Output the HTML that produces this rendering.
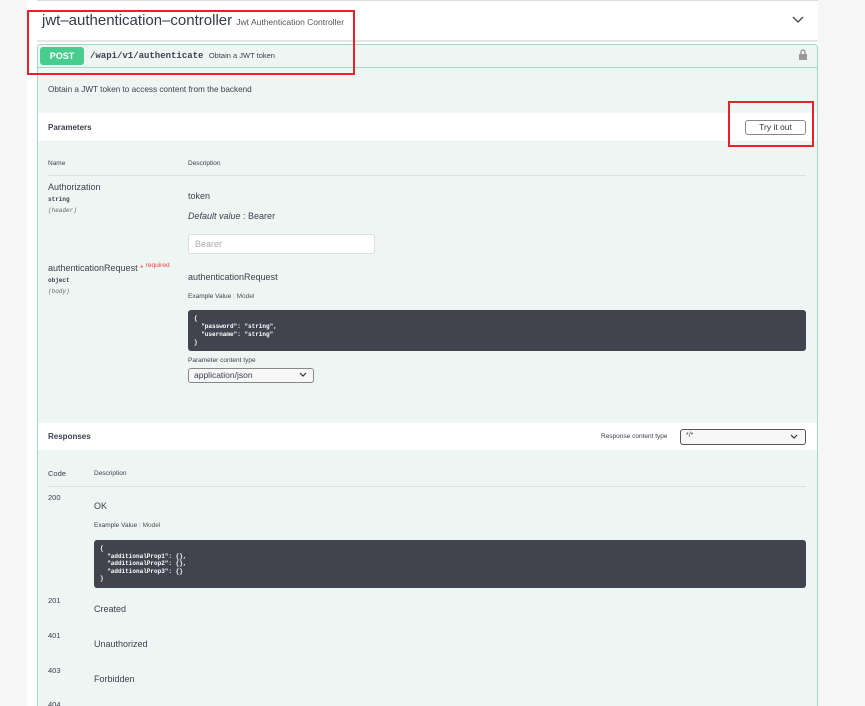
<!DOCTYPE html>
<html style="width:865px;height:706px;overflow:hidden"><head><style>
*{margin:0;padding:0;box-sizing:border-box}
body{width:865px;height:706px;overflow:hidden;background:#f6f6f6;font-family:"Liberation Sans",sans-serif;color:#3b4151;position:relative}
.a{position:absolute;white-space:nowrap}
.mono{font-family:"Liberation Mono",monospace;font-weight:bold}
</style></head><body>
<div class="a" style="left:27px;top:0;width:791px;height:706px;background:#fff"></div>
<div class="a" style="left:37px;top:0;width:781px;height:1px;background:#ddd"></div>
<div class="a" style="left:42px;top:12px;font-size:15px;color:#333a48">jwt–authentication–controller <span style="font-size:8.5px;color:#555">Jwt Authentication Controller</span></div>
<svg class="a" style="left:791px;top:15px" width="14" height="10"><path d="M2 2 L7 7 L12 2" stroke="#444" stroke-width="1.3" fill="none"/></svg>
<div class="a" style="left:37px;top:40px;width:781px;height:2px;background:#e6e6e6"></div>
<div class="a" style="left:37px;top:44px;width:781px;height:662px;background:#edf6f2;border:1px solid #9fdcbf;border-bottom:none;border-radius:3px 3px 0 0"></div>
<div class="a" style="left:37px;top:67px;width:781px;height:1px;background:#9fdcbf"></div>
<div class="a" style="left:40px;top:47px;width:44px;height:18px;background:#49cc90;border-radius:3px;color:#fff;font-size:9px;font-weight:bold;text-align:center;line-height:18px">POST</div>
<div class="a mono" style="left:90px;top:51px;font-size:9px;">/wapi/v1/authenticate <span style="font-family:'Liberation Sans';font-weight:normal;font-size:7.5px;color:#3b4151">Obtain a JWT token</span></div>
<svg class="a" style="left:798px;top:49px" width="10" height="11"><rect x="1" y="5" width="8" height="6" fill="#999"/><path d="M3 5V3a2 2 0 0 1 4 0V5" stroke="#999" stroke-width="1.4" fill="none"/></svg>
<div class="a" style="left:48px;top:85px;font-size:8.2px;">Obtain a JWT token to access content from the backend</div>
<div class="a" style="left:38px;top:113px;width:779px;height:28px;background:#fff"></div>
<div class="a" style="left:48px;top:123px;font-size:8px;font-weight:bold;">Parameters</div>
<div class="a" style="left:745px;top:120px;width:61px;height:15px;border:1.5px solid #888;border-radius:3px;font-size:8.5px;text-align:center;line-height:12px;color:#333">Try it out</div>
<div class="a" style="left:48px;top:160px;font-size:6.5px;">Name</div>
<div class="a" style="left:188px;top:160px;font-size:6.5px;">Description</div>
<div class="a" style="left:48px;top:175px;width:758px;height:1px;background:#d8e3de"></div>
<div class="a" style="left:48px;top:182px;font-size:9px;">Authorization</div>
<div class="a mono" style="left:48px;top:196px;font-size:6px;">string</div>
<div class="a mono" style="left:48px;top:207px;font-size:6px;font-style:italic;font-weight:normal;color:#666">(header)</div>
<div class="a" style="left:188px;top:191px;font-size:9px;">token</div>
<div class="a" style="left:188px;top:211px;font-size:9px;"><i>Default value</i> : Bearer</div>
<div class="a" style="left:188px;top:234px;width:187px;height:20px;background:#fff;border:1px solid #ddd;border-radius:3px;font-size:9px;color:#aaa;padding:4px 6px">Bearer</div>
<div class="a" style="left:48px;top:263px;font-size:9px;">authenticationRequest <span style="color:#f93e3e;font-size:8px">*</span> <span style="color:#f93e3e;font-size:6.5px;position:relative;top:-4px">required</span></div>
<div class="a mono" style="left:48px;top:277px;font-size:6px;">object</div>
<div class="a mono" style="left:48px;top:288px;font-size:6px;font-style:italic;font-weight:normal;color:#666">(body)</div>
<div class="a" style="left:188px;top:272px;font-size:9px;">authenticationRequest</div>
<div class="a" style="left:188px;top:293px;font-size:6.5px;">Example Value <span style="color:#ccc">|</span> <span style="color:#555">Model</span></div>
<div class="a mono" style="left:188px;top:310px;width:618px;height:41px;background:#41444e;border-radius:3px;color:#fff;font-size:6px;line-height:8px;padding:5px 6px;white-space:pre">{
  "password": "string",
  "username": "string"
}</div>
<div class="a" style="left:188px;top:357px;font-size:6.5px;">Parameter content type</div>
<div class="a" style="left:188px;top:368px;width:126px;height:15px;background:#f7f7f7;border:1.5px solid #888;border-radius:3px;font-size:8.5px;padding:1px 5px">application/json</div>
<svg class="a" style="left:299px;top:372px" width="8" height="6"><path d="M1 1L4 4L7 1" stroke="#333" stroke-width="1.2" fill="none"/></svg>
<div class="a" style="left:38px;top:423px;width:779px;height:27px;background:#fff"></div>
<div class="a" style="left:48px;top:432px;font-size:8px;font-weight:bold;">Responses</div>
<div class="a" style="left:601px;top:433px;font-size:6.5px;">Response content type</div>
<div class="a" style="left:680px;top:429px;width:126px;height:16px;background:#f7f7f7;border:1.5px solid #555;border-radius:3px;font-size:7px;padding:2px 5px">*/*</div>
<svg class="a" style="left:790px;top:434px" width="8" height="6"><path d="M1 1L4 4L7 1" stroke="#333" stroke-width="1.2" fill="none"/></svg>
<div class="a" style="left:48px;top:469px;font-size:7.5px;">Code</div>
<div class="a" style="left:94px;top:470px;font-size:6.5px;">Description</div>
<div class="a" style="left:48px;top:486px;width:758px;height:1px;background:#d8e3de"></div>
<div class="a" style="left:48px;top:493px;font-size:7.5px;">200</div>
<div class="a" style="left:94px;top:501px;font-size:9px;">OK</div>
<div class="a" style="left:94px;top:522px;font-size:6.5px;">Example Value <span style="color:#ccc">|</span> <span style="color:#555">Model</span></div>
<div class="a mono" style="left:94px;top:540px;width:712px;height:48px;background:#41444e;border-radius:3px;color:#fff;font-size:6px;line-height:7.5px;padding:5px 6px;white-space:pre">{
  "additionalProp1": {},
  "additionalProp2": {},
  "additionalProp3": {}
}</div>
<div class="a" style="left:48px;top:596px;font-size:7.5px;">201</div>
<div class="a" style="left:94px;top:604px;font-size:9px;">Created</div>
<div class="a" style="left:48px;top:631px;font-size:7.5px;">401</div>
<div class="a" style="left:94px;top:639px;font-size:9px;">Unauthorized</div>
<div class="a" style="left:48px;top:666px;font-size:7.5px;">403</div>
<div class="a" style="left:94px;top:674px;font-size:9px;">Forbidden</div>
<div class="a" style="left:48px;top:700px;font-size:7.5px;">404</div>
<div class="a" style="left:27px;top:10px;width:328px;height:65px;border:2px solid #e8202a"></div>
<div class="a" style="left:728px;top:101px;width:86px;height:46px;border:2px solid #e8202a"></div>
</body></html>
